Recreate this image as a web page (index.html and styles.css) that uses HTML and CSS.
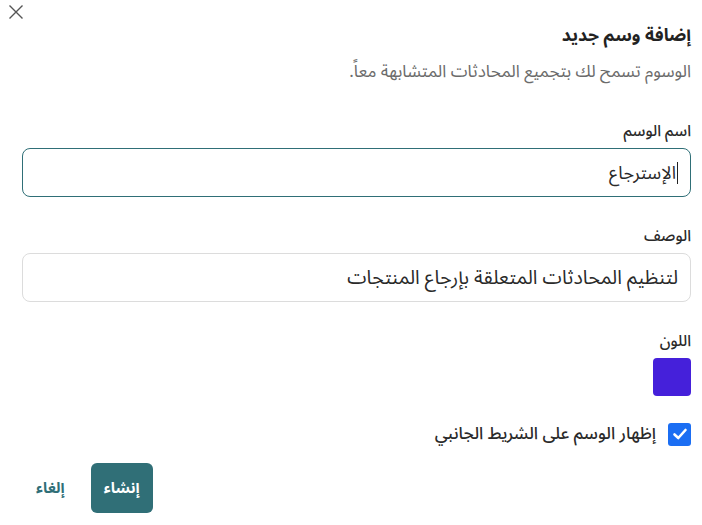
FILE: index.html
```html
<!DOCTYPE html>
<html lang="ar" dir="rtl">
<head>
    <meta charset="UTF-8">
    <meta name="viewport" content="width=device-width, initial-scale=1.0">
    <title>إضافة وسم جديد</title>
    <link rel="stylesheet" href="styles.css">
</head>
<body>
    <div class="modal">
        <button class="close-btn" aria-label="إغلاق">
            <svg width="16" height="16" viewBox="0 0 16 16">
                <path d="M1.5 1.5 L14.5 14.5 M14.5 1.5 L1.5 14.5" stroke="#555" stroke-width="1.4" fill="none"/>
            </svg>
        </button>

        <h2 class="title">إضافة وسم جديد</h2>
        <p class="subtitle">الوسوم تسمح لك بتجميع المحادثات المتشابهة معاً.</p>

        <div class="field">
            <label class="field-label">اسم الوسم</label>
            <div class="text-input active"><span class="caret"></span>الإسترجاع</div>
        </div>

        <div class="field">
            <label class="field-label">الوصف</label>
            <div class="text-input desc">لتنظيم المحادثات المتعلقة بإرجاع المنتجات</div>
        </div>

        <div class="field">
            <label class="field-label">اللون</label>
            <div class="swatch"></div>
        </div>

        <label class="check-row">
            <span class="checkbox">
                <svg width="16" height="16" viewBox="0 0 16 16">
                    <path d="M2.5 8.5 L6.3 12 L13.5 4" stroke="#fff" stroke-width="2.6" fill="none" stroke-linecap="round" stroke-linejoin="round"/>
                </svg>
            </span>
            <span>إظهار الوسم على الشريط الجانبي</span>
        </label>

        <div class="actions">
            <button class="btn-primary">إنشاء</button>
            <button class="btn-link">إلغاء</button>
        </div>
    </div>
</body>
</html>
```

FILE: styles.css
```css
body {
    margin: 0;
    padding: 0;
    background-color: #fff;
    font-family: "Noto Sans Arabic", "Noto Sans", "DejaVu Sans", sans-serif;
    color: #2b2b2b;
}

.modal {
    position: relative;
    padding: 24px 11px 0 22px;
}

.close-btn {
    position: absolute;
    top: 4px;
    left: 8px;
    background: none;
    border: none;
    padding: 0;
    cursor: pointer;
}

.title {
    margin: 0;
    font-size: 17.5px;
    line-height: 24px;
    font-weight: 700;
    color: #222;
}

.subtitle {
    margin: 14px 0 0;
    font-size: 17px;
    line-height: 20px;
    color: #6b6b6b;
}

.field {
    margin-top: 39px;
}

.field + .field {
    margin-top: 29px;
}

.field-label {
    display: block;
    font-size: 15.5px;
    line-height: 20px;
    font-weight: 500;
    color: #2a2a2a;
    margin-bottom: 7px;
}

.text-input {
    height: 47px;
    border: 1px solid #dcdcdc;
    border-radius: 8px;
    padding: 0 12px;
    display: flex;
    align-items: center;
    font-size: 18px;
    color: #2a2a2a;
}

.text-input.desc {
    font-size: 19.5px;
}

.text-input.active {
    border-color: #2f6f77;
}

.caret {
    display: inline-block;
    width: 1px;
    height: 22px;
    background: #222;
    margin-left: 1px;
}

.swatch {
    width: 38px;
    height: 38px;
    border-radius: 4px;
    background-color: #4520da;
}

.check-row {
    display: flex;
    align-items: center;
    gap: 12px;
    margin-top: 26px;
    font-size: 17px;
    line-height: 24px;
    font-weight: 500;
    color: #2a2a2a;
}

.checkbox {
    width: 23px;
    height: 23px;
    border-radius: 3px;
    background-color: #1b6ef3;
    display: flex;
    align-items: center;
    justify-content: center;
}

.actions {
    display: flex;
    justify-content: flex-end;
    align-items: center;
    gap: 26px;
    margin-top: 17px;
    padding-left: 14px;
}

.btn-primary {
    background-color: #306f77;
    color: #fff;
    border: none;
    border-radius: 6px;
    width: 62px;
    height: 50px;
    font-family: inherit;
    font-size: 15px;
    font-weight: 700;
    cursor: pointer;
}

.btn-link {
    background: none;
    border: none;
    padding: 0;
    color: #306f77;
    font-family: inherit;
    font-size: 15px;
    font-weight: 700;
    cursor: pointer;
}
```
